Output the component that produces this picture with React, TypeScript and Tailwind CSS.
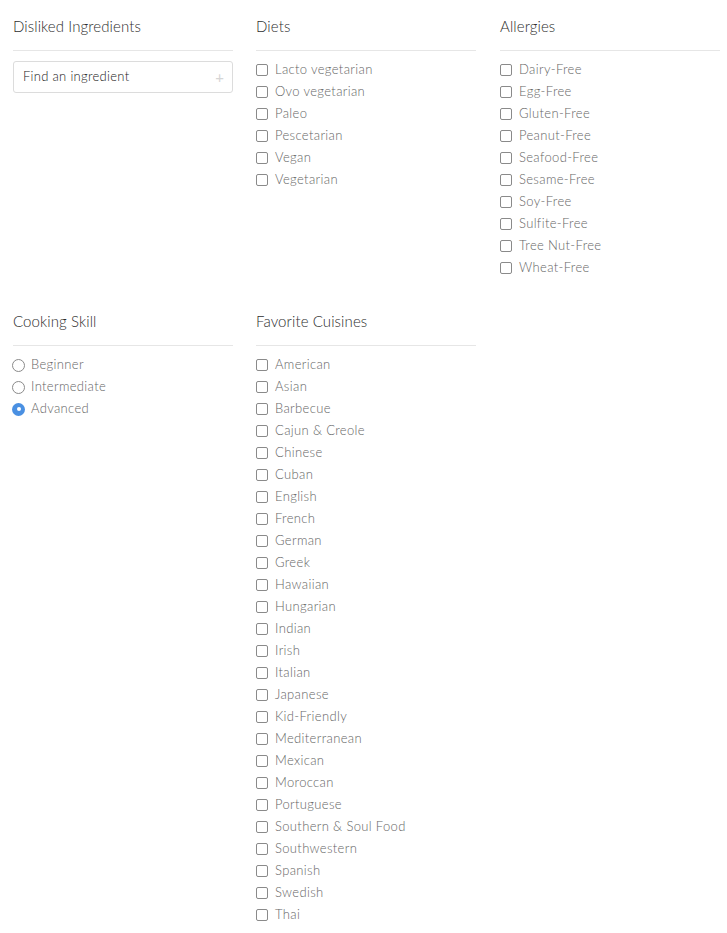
const diets = ['Lacto vegetarian', 'Ovo vegetarian', 'Paleo', 'Pescetarian', 'Vegan', 'Vegetarian']
const allergies = ['Dairy-Free', 'Egg-Free', 'Gluten-Free', 'Peanut-Free', 'Seafood-Free', 'Sesame-Free', 'Soy-Free', 'Sulfite-Free', 'Tree Nut-Free', 'Wheat-Free']
const skills = ['Beginner', 'Intermediate', 'Advanced']
const cuisines = [
  'American', 'Asian', 'Barbecue', 'Cajun & Creole', 'Chinese', 'Cuban', 'English', 'French', 'German', 'Greek',
  'Hawaiian', 'Hungarian', 'Indian', 'Irish', 'Italian', 'Japanese', 'Kid-Friendly', 'Mediterranean', 'Mexican',
  'Moroccan', 'Portuguese', 'Southern & Soul Food', 'Southwestern', 'Spanish', 'Swedish', 'Thai',
]

function Section({ title, children }: { title: string; children?: React.ReactNode }) {
  return (
    <div className="px-[13px] pt-[17px]">
      <h3 className="w-[220px] border-b border-[#e6e6e6] pb-[15px] text-[15px] leading-[18px] font-light tracking-[0.1px] text-[#2e2e2e]">{title}</h3>
      {children}
    </div>
  )
}

function CheckList({ items }: { items: string[] }) {
  return (
    <ul className="mt-[8px]">
      {items.map(label => (
        <li key={label} className="flex h-[22px] items-center gap-[7px] text-[13px] font-light tracking-[0.35px] text-[#666]">
          <span className="h-[12px] w-[12px] shrink-0 rounded-[2px] border border-[#8a8a8a] bg-white" />
          {label}
        </li>
      ))}
    </ul>
  )
}

function RadioList({ items, selected }: { items: string[]; selected: string }) {
  return (
    <ul className="mt-[8px]">
      {items.map(label => (
        <li key={label} className="-ml-px flex h-[22px] items-center gap-[6px] text-[13px] font-light tracking-[0.35px] text-[#666]">
          {label === selected ? (
            <span className="flex h-[13px] w-[13px] shrink-0 items-center justify-center rounded-full bg-[#4a90e2]">
              <span className="h-[4px] w-[4px] rounded-full bg-white" />
            </span>
          ) : (
            <span className="h-[13px] w-[13px] shrink-0 rounded-full border border-[#8a8a8a] bg-white" />
          )}
          {label}
        </li>
      ))}
    </ul>
  )
}

export default function App() {
  return (
    <div className="min-h-[933px] bg-white font-['Lato','Open_Sans',sans-serif]">
      <div className="grid grid-cols-[243px_244px_243px] pb-[16px]">
        <Section title="Disliked Ingredients">
          <div className="mt-[10px] flex h-[32px] w-[220px] items-center justify-between rounded-[3px] border border-[#dcdcdc] pl-[9px] pr-[8px]">
            <span className="text-[13px] font-light tracking-[0.3px] text-[#222]">Find an ingredient</span>
            <span className="text-[15px] leading-none text-[#d5d5d5]">+</span>
          </div>
        </Section>
        <Section title="Diets">
          <CheckList items={diets} />
        </Section>
        <Section title="Allergies">
          <CheckList items={allergies} />
        </Section>
      </div>
      <div className="grid grid-cols-[243px_244px_243px]">
        <Section title="Cooking Skill">
          <RadioList items={skills} selected="Advanced" />
        </Section>
        <Section title="Favorite Cuisines">
          <CheckList items={cuisines} />
        </Section>
      </div>
    </div>
  )
}
